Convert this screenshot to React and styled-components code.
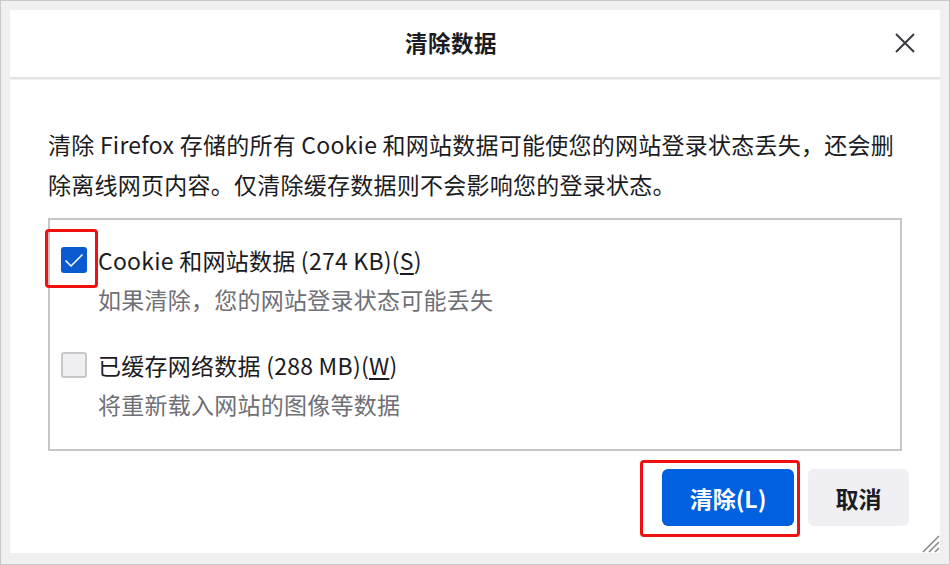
import React from "react";
import styled, { createGlobalStyle } from "styled-components";

const GlobalStyle = createGlobalStyle`
  html, body {
    margin: 0;
    padding: 0;
    background: #ffffff;
  }
  body {
    font-family: "Noto Sans CJK SC", "Open Sans", sans-serif;
    color: #1c1b22;
  }
`;

const Frame = styled.div`
  box-sizing: border-box;
  width: 950px;
  height: 565px;
  border: 1px solid #c9c9c9;
  background: #f0f0f0;
  padding: 9px 9px 11px 9px;
  display: flex;
`;

const Dialog = styled.div`
  position: relative;
  flex: 1;
  background: #ffffff;
  display: flex;
  flex-direction: column;
`;

const Header = styled.div`
  position: relative;
  height: 67px;
  padding-right: 48px;
  display: flex;
  align-items: center;
  justify-content: center;
  border-bottom: 2px solid #e3e3e3;
  box-shadow: 0 1px 0 #f2f2f2;
`;

const Title = styled.h1`
  margin: 0 0 3px 0;
  font-size: 22.5px;
  font-weight: 700;
  color: #1c1b22;
  letter-spacing: 0.5px;
`;

const CloseButton = styled.button`
  position: absolute;
  right: 22px;
  top: 20px;
  width: 26px;
  height: 26px;
  padding: 0;
  border: none;
  background: transparent;
  display: flex;
  align-items: center;
  justify-content: center;
`;

const Body = styled.div`
  padding: 45px 38px 0 38px;
  display: flex;
  flex-direction: column;
`;

const Description = styled.p`
  margin: 0;
  font-size: 23px;
  letter-spacing: 0.25px;
  line-height: 40px;
  color: #1c1b22;
  white-space: nowrap;
`;

const GroupBox = styled.div`
  margin-top: 14px;
  height: 233px;
  box-sizing: border-box;
  border: 2px solid #c6c6c6;
  padding: 21px 11px 0 11px;
  display: flex;
  flex-direction: column;
  gap: 28px;
`;

const Item = styled.div`
  display: flex;
  flex-direction: column;
`;

const ItemRow = styled.div`
  display: flex;
  align-items: center;
  gap: 11px;
  height: 38px;
`;

const CheckWrap = styled.div`
  position: relative;
  width: 26px;
  height: 26px;
`;

const Box = styled.div`
  box-sizing: border-box;
  width: 26px;
  height: 26px;
  border-radius: 3px;
  background: ${({ checked }) => (checked ? "#0a5bd0" : "#efeff1")};
  border: ${({ checked }) => (checked ? "none" : "2px solid #c8c8cc")};
  display: flex;
  align-items: center;
  justify-content: center;
`;

const Highlight = styled.div`
  position: absolute;
  box-sizing: border-box;
  left: ${({ left }) => left}px;
  top: ${({ top }) => top}px;
  width: ${({ width }) => width}px;
  height: ${({ height }) => height}px;
  border: 3px solid #f01010;
  border-radius: 4px;
  pointer-events: none;
`;

const Label = styled.span`
  font-size: 23px;
  letter-spacing: 0.25px;
  color: #1c1b22;
  u {
    text-underline-offset: 3px;
  }
`;

const SubText = styled.div`
  margin-left: 37px;
  font-size: 23px;
  letter-spacing: 0.25px;
  line-height: 38px;
  color: #6f6f76;
  margin-top: 1px;
`;

const Footer = styled.div`
  margin-top: 18px;
  padding-right: 31px;
  display: flex;
  justify-content: flex-end;
  gap: 14px;
`;

const ButtonWrap = styled.div`
  position: relative;
`;

const Button = styled.button`
  height: 57px;
  width: ${({ width }) => width}px;
  border: none;
  border-radius: 6px;
  font-family: "Noto Sans CJK SC", "Open Sans", sans-serif;
  font-size: 23px;
  font-weight: 700;
  background: ${({ primary }) => (primary ? "#0061e0" : "#f0f0f4")};
  color: ${({ primary }) => (primary ? "#ffffff" : "#1c1b22")};
`;

const Grip = styled.svg`
  position: absolute;
  right: 0;
  bottom: 0;
`;

const Checkbox = ({ checked, highlight }) => (
  <CheckWrap>
    <Box checked={checked}>
      {checked && (
        <svg width="20" height="15" viewBox="0 0 20 15">
          <path d="M1.5 7.5 L7 13 L18.5 1.5" fill="none" stroke="#ffffff" strokeWidth="1.5" />
        </svg>
      )}
    </Box>
    {highlight && <Highlight left={-16} top={-18} width={53} height={59} />}
  </CheckWrap>
);

export default function App() {
  return (
    <>
      <GlobalStyle />
      <Frame>
        <Dialog>
          <Header>
            <Title>清除数据</Title>
            <CloseButton>
              <svg width="22" height="22" viewBox="0 0 22 22">
                <path d="M2 2 L20 20 M20 2 L2 20" stroke="#3a3944" strokeWidth="2" />
              </svg>
            </CloseButton>
          </Header>
          <Body>
            <Description>
              清除 Firefox 存储的所有 Cookie 和网站数据可能使您的网站登录状态丢失，还会删
              <br />
              除离线网页内容。仅清除缓存数据则不会影响您的登录状态。
            </Description>
            <GroupBox>
              <Item>
                <ItemRow>
                  <Checkbox checked highlight />
                  <Label>
                    Cookie 和网站数据 (274 KB)(<u>S</u>)
                  </Label>
                </ItemRow>
                <SubText>如果清除，您的网站登录状态可能丢失</SubText>
              </Item>
              <Item>
                <ItemRow>
                  <Checkbox />
                  <Label>
                    已缓存网络数据 (288 MB)(<u>W</u>)
                  </Label>
                </ItemRow>
                <SubText>将重新载入网站的图像等数据</SubText>
              </Item>
            </GroupBox>
          </Body>
          <Footer>
            <ButtonWrap>
              <Button primary width={132}>
                清除(L)
              </Button>
              <Highlight left={-22} top={-9} width={160} height={77} />
            </ButtonWrap>
            <ButtonWrap>
              <Button width={101}>取消</Button>
            </ButtonWrap>
          </Footer>
          <Grip width="22" height="22" viewBox="0 0 22 22">
            <path d="M21 5 L5 21 M21 11 L11 21 M21 17 L17 21" stroke="#8a8a8a" strokeWidth="1.6" />
          </Grip>
        </Dialog>
      </Frame>
    </>
  );
}
